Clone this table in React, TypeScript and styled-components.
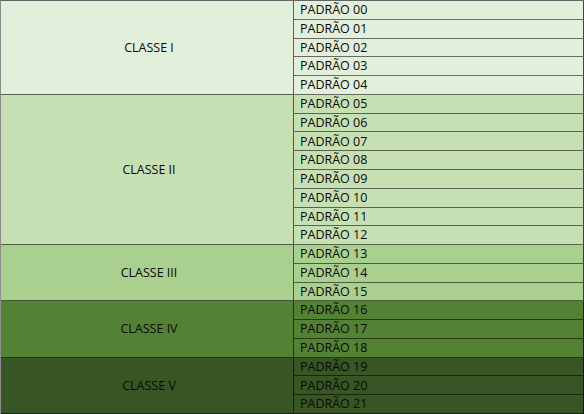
import React from 'react';
import styled, { createGlobalStyle } from 'styled-components';

const GlobalStyle = createGlobalStyle`
  html, body {
    margin: 0;
    padding: 0;
    background: #ffffff;
  }
`;

const classes = [
  { label: 'CLASSE I', count: 5, bg: '#e2efda' },
  { label: 'CLASSE II', count: 8, bg: '#c6e0b4' },
  { label: 'CLASSE III', count: 3, bg: '#a9d08e' },
  { label: 'CLASSE IV', count: 3, bg: '#548235' },
  { label: 'CLASSE V', count: 3, bg: '#375623' },
];

const Table = styled.div`
  width: 584px;
  height: 414px;
  box-sizing: border-box;
  display: grid;
  grid-template-columns: 293px 1fr;
  grid-template-rows: repeat(22, minmax(0, 1fr));
  border-top: 1px solid rgba(0, 0, 0, 0.6);
  border-left: 1px solid rgba(0, 0, 0, 0.45);
  font-family: 'Open Sans', 'Liberation Sans', sans-serif;
  font-size: 12.5px;
  line-height: 1;
  color: #0a0a0a;
`;

const ClassCell = styled.div<{ $bg: string; $span: number }>`
  grid-column: 1;
  grid-row: span ${(p) => p.$span};
  background: ${(p) => p.$bg};
  display: flex;
  align-items: center;
  justify-content: center;
  padding-left: 4px;
  padding-top: 1px;
  border-right: 1px solid rgba(0, 0, 0, 0.6);
  border-bottom: 1px solid rgba(0, 0, 0, 0.6);
`;

const PatternCell = styled.div<{ $bg: string }>`
  grid-column: 2;
  background: ${(p) => p.$bg};
  display: flex;
  align-items: center;
  padding-left: 6px;
  padding-top: 1px;
  min-height: 0;
  border-right: 1px solid rgba(0, 0, 0, 0.7);
  border-bottom: 1px solid rgba(0, 0, 0, 0.55);
`;

const ClassGroup = ({ label, count, bg, start }: { label: string; count: number; bg: string; start: number }) => (
  <>
    <ClassCell $bg={bg} $span={count}>
      {label}
    </ClassCell>
    {Array.from({ length: count }, (_, i) => {
      const n = String(start + i).padStart(2, '0');
      return (
        <PatternCell key={n} $bg={bg} style={{ gridRow: start + i + 1 }}>
          PADRÃO {n}
        </PatternCell>
      );
    })}
  </>
);

export default function App() {
  let start = 0;
  return (
    <>
      <GlobalStyle />
      <Table>
        {classes.map((c) => {
          const s = start;
          start += c.count;
          return (
            <ClassGroup key={c.label} label={c.label} count={c.count} bg={c.bg} start={s} />
          );
        })}
      </Table>
    </>
  );
}
